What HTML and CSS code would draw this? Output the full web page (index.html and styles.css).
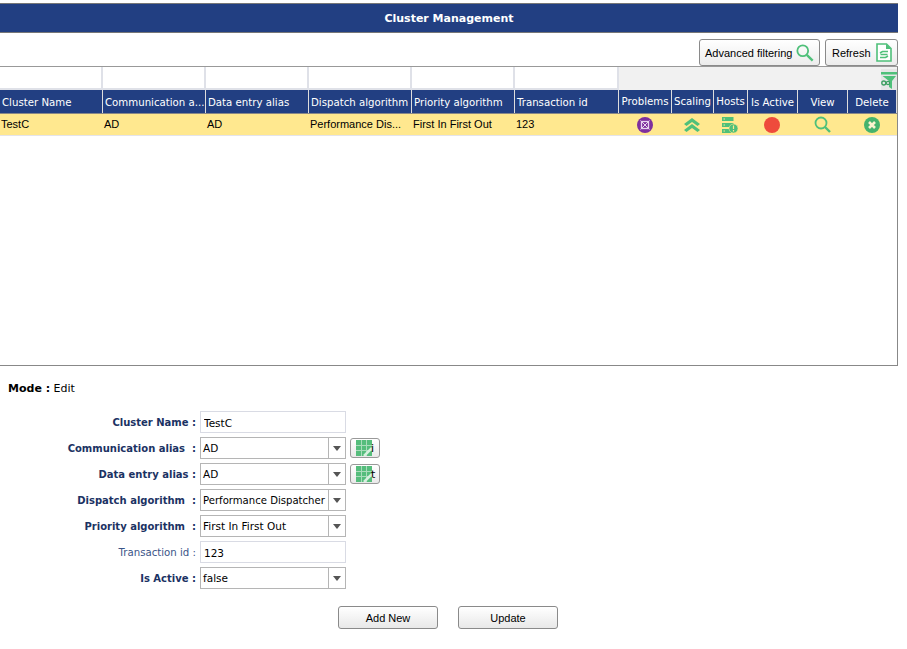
FILE: index.html
```html
<!DOCTYPE html>
<html lang="en">
<head>
    <meta charset="UTF-8">
    <meta name="viewport" content="width=device-width, initial-scale=1.0">
    <title>Cluster Management</title>
    <link rel="stylesheet" href="styles.css">
</head>
<body>
    <header class="title-bar">Cluster Management</header>

    <div class="toolbar">
        <button class="tool-btn tool-btn-filter" type="button">
            Advanced filtering
            <svg width="18" height="18" viewBox="0 0 20 20"><circle cx="7.5" cy="7.5" r="6" fill="none" stroke="#4fc07a" stroke-width="2"/><path d="M12 12 L18.5 18.5" stroke="#4fc07a" stroke-width="2.6"/></svg>
        </button>
        <button class="tool-btn tool-btn-refresh" type="button">
            Refresh
            <svg width="16" height="19" viewBox="0 0 16 19"><path d="M1 1 H10.5 L15 5.5 V18 H1 Z" fill="#fff" stroke="#4fc07a" stroke-width="1.6"/><path d="M10 1 V6 H15 Z" fill="#4fc07a"/><path d="M4 10 L6.5 8.5 H12 M12 13 L9.5 14.5 H4 M4.5 11.5 H11.5" fill="none" stroke="#4fc07a" stroke-width="1.5"/></svg>
        </button>
    </div>

    <section class="grid-box">
        <div class="grid-row filter-row">
            <div class="filter-cell"></div>
            <div class="filter-cell"></div>
            <div class="filter-cell"></div>
            <div class="filter-cell"></div>
            <div class="filter-cell"></div>
            <div class="filter-cell"></div>
            <div class="filter-rest">
                <span class="filter-icon">
                    <svg width="16" height="19" viewBox="0 0 16 19"><path d="M0 1 H16 V3.5 H0 Z M1.5 5 H15 L11 10 V18 L8 16 V10 Z" fill="#4fc07a"/><circle cx="2.8" cy="12" r="2" fill="none" stroke="#3f9f63" stroke-width="1.4"/><circle cx="7" cy="12" r="1.6" fill="none" stroke="#3f9f63" stroke-width="1.2"/></svg>
                </span>
            </div>
        </div>
        <div class="grid-row head-row">
            <div class="head-cell">Cluster Name</div>
            <div class="head-cell">Communication a...</div>
            <div class="head-cell">Data entry alias</div>
            <div class="head-cell">Dispatch algorithm</div>
            <div class="head-cell">Priority algorithm</div>
            <div class="head-cell">Transaction id</div>
            <div class="head-cell head-center head-raised">Problems</div>
            <div class="head-cell head-center head-raised">Scaling</div>
            <div class="head-cell head-center head-raised">Hosts</div>
            <div class="head-cell head-center">Is Active</div>
            <div class="head-cell head-center">View</div>
            <div class="head-cell head-center">Delete</div>
        </div>
        <div class="grid-row data-row">
            <div class="data-cell">TestC</div>
            <div class="data-cell">AD</div>
            <div class="data-cell">AD</div>
            <div class="data-cell">Performance Dis...</div>
            <div class="data-cell">First In First Out</div>
            <div class="data-cell">123</div>
            <div class="data-cell icon-cell">
                <svg width="16" height="16" viewBox="0 0 16 16"><circle cx="8" cy="8" r="8" fill="#7e2f9e"/><rect x="4.5" y="4.5" width="7" height="7" fill="none" stroke="#e6d4ee" stroke-width="1.3"/><path d="M3.5 3.5 L12.5 12.5 M12.5 3.5 L3.5 12.5" stroke="#e6d4ee" stroke-width="1"/></svg>
            </div>
            <div class="data-cell icon-cell">
                <svg width="16" height="14" viewBox="0 0 16 14"><path d="M8 0 L16 6 L13.5 8 L8 4 L2.5 8 L0 6 Z M8 6 L16 12 L13.5 14 L8 10 L2.5 14 L0 12 Z" fill="#4fc07a"/></svg>
            </div>
            <div class="data-cell icon-cell">
                <svg width="16" height="16" viewBox="0 0 16 16"><path d="M0 0 H11.5 V4 H0 Z M0 6 H11.5 V10 H0 Z M0 12 H9 V16 H0 Z" fill="#4fc07a"/><path d="M1.5 2 H3 M1.5 8 H3 M1.5 14 H3" stroke="#ffe88f" stroke-width="1"/><circle cx="11.5" cy="11.5" r="4.5" fill="#4fc07a" stroke="#ffe88f" stroke-width="0.6"/><path d="M11.5 8.5 V12 M11.5 13 V14.5" stroke="#ffe88f" stroke-width="1.2"/></svg>
            </div>
            <div class="data-cell icon-cell">
                <svg width="16" height="16" viewBox="0 0 16 16"><circle cx="8" cy="8" r="8" fill="#ee4b3c"/></svg>
            </div>
            <div class="data-cell icon-cell">
                <svg width="17" height="17" viewBox="0 0 17 17"><circle cx="7" cy="7" r="5.5" fill="none" stroke="#4fc07a" stroke-width="1.8"/><path d="M11 11 L16 16" stroke="#4fc07a" stroke-width="2.4"/></svg>
            </div>
            <div class="data-cell icon-cell">
                <svg width="16" height="16" viewBox="0 0 16 16"><circle cx="8" cy="8" r="8" fill="#45b36d"/><path d="M5 5 L11 11 M11 5 L5 11" stroke="#fbf3cf" stroke-width="2.6"/></svg>
            </div>
        </div>
    </section>

    <p class="mode"><b>Mode :</b> Edit</p>

    <form class="edit-form">
        <label class="field-label">Cluster Name :</label>
        <div class="field-wrap"><input class="text-field" type="text" value="TestC"></div>

        <label class="field-label">Communication alias&nbsp; :</label>
        <div class="field-wrap">
            <div class="combo"><span class="combo-value">AD</span><span class="combo-arrow"></span></div>
            <button class="lookup-btn" type="button">
                <svg width="16" height="16" viewBox="0 0 16 16"><use href="#lookup-grid"/></svg><span class="lookup-tail">i</span>
            </button>
        </div>

        <label class="field-label">Data entry alias :</label>
        <div class="field-wrap">
            <div class="combo"><span class="combo-value">AD</span><span class="combo-arrow"></span></div>
            <button class="lookup-btn" type="button">
                <svg width="16" height="16" viewBox="0 0 16 16"><use href="#lookup-grid"/></svg><span class="lookup-tail">t</span>
            </button>
        </div>

        <label class="field-label">Dispatch algorithm&nbsp; :</label>
        <div class="field-wrap">
            <div class="combo"><span class="combo-value combo-value-tight">Performance Dispatcher</span><span class="combo-arrow"></span></div>
        </div>

        <label class="field-label">Priority algorithm&nbsp; :</label>
        <div class="field-wrap">
            <div class="combo"><span class="combo-value">First In First Out</span><span class="combo-arrow"></span></div>
        </div>

        <label class="field-label field-label-plain">Transaction id :</label>
        <div class="field-wrap"><input class="text-field" type="text" value="123"></div>

        <label class="field-label">Is Active :</label>
        <div class="field-wrap">
            <div class="combo"><span class="combo-value">false</span><span class="combo-arrow"></span></div>
        </div>
    </form>

    <div class="form-actions">
        <button class="form-btn" type="button">Add New</button>
        <button class="form-btn" type="button">Update</button>
    </div>

    <svg class="svg-defs" width="0" height="0">
        <symbol id="lookup-grid" viewBox="0 0 16 16">
            <path d="M0 0 H16 V16 H0 Z" fill="#55bd7c"/>
            <path d="M5.5 0 V16 M10.5 0 V16 M0 5.5 H16 M0 10.5 H16" stroke="#a9dcbb" stroke-width="1"/>
            <path d="M8 16 L16 8" stroke="#d8f0e0" stroke-width="2.5"/>
        </symbol>
    </svg>
</body>
</html>
```

FILE: styles.css
```css
body {
    font-family: "DejaVu Sans", Verdana, sans-serif;
    font-size: 11px;
    background-color: #fff;
    color: #000;
    margin: 0;
    padding-top: 3px;
    width: 898px;
}

.title-bar {
    height: 30px;
    box-sizing: border-box;
    line-height: 29px;
    background-color: #223f82;
    border-top: 1px solid #777;
    border-bottom: 1px solid #777;
    color: #fff;
    font-weight: bold;
    text-align: center;
}

.toolbar {
    display: flex;
    justify-content: flex-end;
    gap: 5px;
    height: 33px;
    padding-top: 6px;
    box-sizing: border-box;
}

.tool-btn {
    display: flex;
    align-items: center;
    justify-content: space-between;
    height: 27px;
    padding: 0 5px;
    border: 1px solid #8a8a8a;
    border-radius: 3px;
    background: linear-gradient(#fff, #ececec);
    font-family: "Liberation Sans", Arial, sans-serif;
    font-size: 11px;
    color: #000;
    white-space: nowrap;
}

.tool-btn-filter {
    width: 121px;
}

.tool-btn-refresh {
    width: 73px;
    padding-left: 6px;
}

.grid-box {
    height: 300px;
    box-sizing: border-box;
    border-top: 1px solid #999;
    border-right: 1px solid #888;
    border-bottom: 1px solid #888;
}

.grid-row {
    display: grid;
    grid-template-columns: 103px 103px 103px 103px 103px 104px 53px 42px 34px 50px 50px 49px;
    box-sizing: border-box;
}

.filter-row {
    height: 23px;
}

.filter-cell {
    border-right: 2px solid #dfe1e8;
    border-bottom: 2px solid #dfe1e8;
}

.filter-rest {
    grid-column: 7 / 13;
    display: flex;
    justify-content: flex-end;
    align-items: flex-end;
    background-color: #f1f1f1;
}

.filter-icon {
    display: flex;
    height: 21px;
    align-items: flex-end;
    background-color: #e6e6e6;
}

.head-row {
    height: 24px;
    background-color: #223f82;
    border-bottom: 1px solid #888;
}

.head-cell {
    display: flex;
    align-items: center;
    padding-left: 2px;
    padding-top: 2px;
    border-right: 1px solid #ddd;
    color: #fff;
    font-size: 10.2px;
    white-space: nowrap;
    overflow: hidden;
}

.head-center {
    justify-content: center;
    padding-left: 0;
}

.head-raised {
    padding-top: 0;
}

.data-row {
    height: 22px;
    background-color: #ffe88f;
    border-bottom: 1px solid #e4e4ea;
    font-family: "Liberation Sans", Arial, sans-serif;
    font-size: 11px;
}

.data-cell {
    display: flex;
    align-items: center;
    padding-left: 1px;
    padding-bottom: 1px;
    white-space: nowrap;
}

.icon-cell {
    justify-content: center;
    padding-left: 0;
    padding-right: 2px;
    padding-bottom: 0;
}

.mode {
    margin: 15px 0 0 8px;
    height: 16px;
    line-height: 16px;
}

.edit-form {
    display: grid;
    grid-template-columns: 196px auto;
    column-gap: 4px;
    row-gap: 4px;
    margin-top: 14px;
}

.field-label {
    display: flex;
    align-items: center;
    justify-content: flex-end;
    font-size: 10px;
    font-weight: bold;
    color: #1b3263;
    white-space: nowrap;
}

.field-label-plain {
    font-weight: normal;
    font-size: 10.2px;
    color: #3a5488;
}

.field-wrap {
    display: flex;
    align-items: center;
    gap: 4px;
    height: 22px;
}

.text-field {
    width: 146px;
    height: 22px;
    box-sizing: border-box;
    padding: 1px 3px 0;
    border: 1px solid #d9dbe4;
    outline: none;
    font-family: "DejaVu Sans", Verdana, sans-serif;
    font-size: 10.5px;
    color: #000;
}

.combo {
    display: flex;
    width: 146px;
    height: 22px;
    box-sizing: border-box;
    border: 1px solid #b5b5b5;
    background-color: #fff;
}

.combo-value {
    flex: 1;
    padding-left: 2px;
    line-height: 20px;
    font-size: 10.5px;
    white-space: nowrap;
    overflow: hidden;
}

.combo-value-tight {
    font-size: 10.1px;
    line-height: 21px;
}

.combo-arrow {
    position: relative;
    width: 16px;
    border-left: 1px solid #b5b5b5;
    flex: none;
}

.combo-arrow::after {
    content: "";
    position: absolute;
    left: 4px;
    top: 8px;
    border-left: 4px solid transparent;
    border-right: 4px solid transparent;
    border-top: 5px solid #555;
}

.lookup-btn {
    display: flex;
    align-items: center;
    width: 30px;
    height: 20px;
    padding: 0 0 0 5px;
    border: 1px solid #999;
    border-radius: 3px;
    background: linear-gradient(#fff, #e9e9e9);
    font-family: "DejaVu Sans", Verdana, sans-serif;
    font-size: 11px;
    color: #000;
}

.lookup-tail {
    margin-left: -1px;
}

.form-actions {
    display: flex;
    gap: 20px;
    margin: 17px 0 0 338px;
}

.form-btn {
    width: 100px;
    height: 23px;
    border: 1px solid #8a8a8a;
    border-radius: 3px;
    background: linear-gradient(#fff, #e8e8e8);
    font-family: "Liberation Sans", Arial, sans-serif;
    font-size: 11px;
    color: #000;
}

.svg-defs {
    display: block;
}
```
